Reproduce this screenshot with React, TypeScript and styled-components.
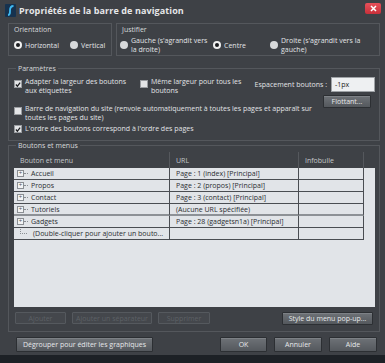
import React from "react";
import styled, { createGlobalStyle } from "styled-components";

const Global = createGlobalStyle`
  html, body { margin: 0; padding: 0; background: #3e4146; }
  body { font-family: "Open Sans", "Noto Sans", sans-serif; font-size: 7px; color: #e2e4e6; }
  * { box-sizing: border-box; }
`;

const Dialog = styled.div`
  width: 385px;
  height: 363px;
  background: #3e4146;
  display: flex;
  flex-direction: column;
  overflow: hidden;
`;

const TitleBar = styled.div`
  height: 21px;
  display: flex;
  align-items: center;
  padding: 0 4px 0 5px;
  gap: 3px;
`;

const Title = styled.div`
  flex: 1;
  font-size: 9px;
  font-weight: 700;
  color: #e6e7e9;
  letter-spacing: 0.1px;
`;

const CloseBtn = styled.div`
  width: 16px;
  height: 11px;
  border-radius: 2px;
  background: linear-gradient(#e8505a, #c7303a);
  display: flex;
  align-items: center;
  justify-content: center;
  margin-top: -5px;
`;

const Body = styled.div`
  flex: 1;
  display: flex;
  flex-direction: column;
  padding: 2px 5px 0 8px;
`;

const TopRow = styled.div`
  display: flex;
  gap: 4px;
  height: 33px;
`;

const Box = styled.div<{ $w?: number }>`
  border: 1px solid #54575c;
  ${(p) => (p.$w ? `width: ${p.$w}px;` : "flex: 1;")}
  display: flex;
  flex-direction: column;
  padding: 1px 4px 0 5px;
`;

const BoxLabel = styled.div`
  color: #d8dadc;
  line-height: 10px;
`;

const RadioRow = styled.div`
  display: flex;
  align-items: center;
  flex: 1;
`;

const RadioItem = styled.label<{ $w?: number; $shift?: number }>`
  display: flex;
  align-items: center;
  gap: 3px;
  ${(p) => (p.$w ? `width: ${p.$w}px;` : "")}
  ${(p) => (p.$shift ? `margin-left: ${p.$shift}px;` : "")}
  line-height: 9px;
`;

const Radio = styled.span<{ $on?: boolean }>`
  flex: none;
  width: 8px;
  height: 8px;
  border-radius: 50%;
  background: ${(p) => (p.$on ? "#f0f0f0" : "#d8d9db")};
  display: flex;
  align-items: center;
  justify-content: center;
  &::after {
    content: "";
    width: 4px;
    height: 4px;
    border-radius: 50%;
    background: ${(p) => (p.$on ? "#1a1c1f" : "transparent")};
  }
`;

const Fieldset = styled.fieldset<{ $h: number }>`
  border: 1px solid #54575c;
  margin: 0;
  padding: 0 4px 0 5px;
  height: ${(p) => p.$h}px;
  min-width: 0;
  display: flex;
  flex-direction: column;
`;

const Legend = styled.legend`
  padding: 0 2px;
  margin-left: 2px;
  color: #d8dadc;
  line-height: 9px;
`;

const ParamsGrid = styled.div`
  display: flex;
  flex-direction: column;
`;

const ParamTop = styled.div`
  display: flex;
  align-items: flex-start;
  height: 30px;
  padding-top: 4px;
`;

const CheckItem = styled.label<{ $w?: number }>`
  display: flex;
  align-items: flex-start;
  gap: 3px;
  line-height: 9px;
  ${(p) => (p.$w ? `width: ${p.$w}px;` : "")}
`;

const Check = styled.span<{ $on?: boolean; $mt?: number }>`
  flex: none;
  width: 8px;
  height: 8px;
  margin-top: ${(p) => p.$mt ?? 3}px;
  background: #e4e5e7;
  border: 1px solid #9a9da1;
  display: flex;
  align-items: center;
  justify-content: center;
`;

const SpacingCol = styled.div`
  margin-left: auto;
  display: flex;
  flex-direction: column;
  align-items: flex-end;
  gap: 3px;
`;

const SpacingRow = styled.div`
  display: flex;
  align-items: center;
  gap: 4px;
  white-space: nowrap;
`;

const Input = styled.div`
  width: 44px;
  height: 15px;
  background: #eef0f2;
  border: 1px solid #9ea2a6;
  color: #222;
  padding: 2px 3px;
  line-height: 9px;
`;

const Btn = styled.div<{ $w: number; $h?: number; $disabled?: boolean; $mr?: number }>`
  width: ${(p) => p.$w}px;
  height: ${(p) => p.$h ?? 14}px;
  margin-right: ${(p) => p.$mr ?? 0}px;
  display: flex;
  align-items: center;
  justify-content: center;
  white-space: nowrap;
  border-radius: 1px;
  ${(p) =>
    p.$disabled
      ? `
    border: 1px solid #55595e;
    color: #5d6166;
    background: #44474c;
  `
      : `
    border: 1px solid #2c2f33;
    color: #e6e8ea;
    background: linear-gradient(#6e7277, #54585d);
    box-shadow: inset 0 1px 0 #7d8186;
  `}
`;

const ParamLine = styled.div<{ $mt: number }>`
  margin-top: ${(p) => p.$mt}px;
`;

const TableWrap = styled.div`
  margin-top: 2px;
  display: flex;
  flex-direction: column;
`;

const Cols = "156px 129px 65px 7px";

const HeadRow = styled.div`
  display: grid;
  grid-template-columns: ${Cols};
  height: 16px;
`;

const HeadCell = styled.div`
  display: flex;
  align-items: center;
  padding-left: 6px;
  color: #c4c7ca;
  border-right: 1px solid #55585d;
`;

const Tbody = styled.div`
  height: 139px;
  background: #e1e4e8;
  display: flex;
  flex-direction: column;
`;

const Row = styled.div`
  display: grid;
  grid-template-columns: ${Cols};
  height: 12px;
`;

const Cell = styled.div<{ $thick?: boolean }>`
  display: flex;
  align-items: center;
  padding-left: 6px;
  color: #2b2e32;
  white-space: nowrap;
  overflow: hidden;
  border-right: 1px solid #4a4d52;
  border-bottom: ${(p) => (p.$thick ? "2px solid #8d9196" : "1px solid #4a4d52")};
`;

const TreeCell = styled(Cell)`
  padding-left: 3px;
`;

const Plus = styled.span`
  flex: none;
  width: 7px;
  height: 7px;
  border: 1px solid #8a8e93;
  background: #f2f3f4;
  display: flex;
  align-items: center;
  justify-content: center;
  font-size: 6px;
  line-height: 5px;
  color: #555;
`;

const TreeLine = styled.span<{ $w: number }>`
  flex: none;
  width: ${(p) => p.$w}px;
  border-top: 1px dotted #8a8e93;
  margin-right: 3px;
`;

const Elbow = styled.span`
  flex: none;
  width: 7px;
  height: 7px;
  margin-left: 3px;
  margin-top: -6px;
  border-left: 1px dotted #8a8e93;
  border-bottom: 1px dotted #8a8e93;
  margin-right: 6px;
`;

const GroupButtons = styled.div`
  display: flex;
  gap: 6px;
  padding: 5px 0 0 1px;
`;

const Spacer = styled.div`
  flex: 1;
`;

const Gap = styled.div<{ $h: number }>`
  height: ${(p) => p.$h}px;
`;

const BottomRow = styled.div`
  display: flex;
  align-items: center;
  padding: 5px 0 0 8px;
  gap: 7px;
`;

const BottomStrip = styled.div`
  height: 8px;
  background: #1d2126;
  margin-top: auto;
`;

const rows = [
  { name: "Accueil", url: "Page : 1 (index) [Principal]" },
  { name: "Propos", url: "Page : 2 (propos) [Principal]" },
  { name: "Contact", url: "Page : 3 (contact) [Principal]" },
  { name: "Tutoriels", url: "(Aucune URL spécifiée)", thick: true },
  { name: "Gadgets", url: "Page : 28 (gadgetsn1a) [Principal]" },
];

const CheckMark = () => (
  <svg width="7" height="7" viewBox="0 0 7 7">
    <path d="M1 3.5 L2.8 5.5 L6 1.2" stroke="#1b1d20" strokeWidth="1.4" fill="none" />
  </svg>
);

export default function App() {
  return (
    <>
      <Global />
      <Dialog>
        <TitleBar>
          <svg width="11" height="13" viewBox="0 0 11 13">
            <rect x="0" y="0" width="11" height="13" rx="1" fill="#16324f" />
            <path d="M3 11 C5 11 5 9 5 6.5 C5 3.5 6 2 8.5 2" stroke="#3fb8f0" strokeWidth="1.8" fill="none" />
          </svg>
          <Title>Propriétés de la barre de navigation</Title>
          <CloseBtn>
            <svg width="7" height="7" viewBox="0 0 7 7">
              <path d="M1 1 L6 6 M6 1 L1 6" stroke="#fff" strokeWidth="1.5" />
            </svg>
          </CloseBtn>
        </TitleBar>
        <Body>
          <TopRow>
            <Box $w={104}>
              <BoxLabel>Orientation</BoxLabel>
              <RadioRow>
                <RadioItem $w={56}>
                  <Radio $on />
                  Horizontal
                </RadioItem>
                <RadioItem>
                  <Radio />
                  Vertical
                </RadioItem>
              </RadioRow>
            </Box>
            <Box>
              <BoxLabel>Justifier</BoxLabel>
              <RadioRow>
                <RadioItem $w={93} $shift={-2}>
                  <Radio />
                  <span>
                    Gauche (s'agrandit vers
                    <br />
                    la droite)
                  </span>
                </RadioItem>
                <RadioItem $w={57}>
                  <Radio $on />
                  Centre
                </RadioItem>
                <RadioItem>
                  <Radio />
                  <span>
                    Droite (s'agrandit vers la
                    <br />
                    gauche)
                  </span>
                </RadioItem>
              </RadioRow>
            </Box>
          </TopRow>
          <Gap $h={8} />
          <Fieldset $h={77}>
            <Legend>Paramètres</Legend>
            <ParamsGrid>
              <ParamTop>
                <CheckItem $w={126}>
                  <Check $on>
                    <CheckMark />
                  </Check>
                  <span>
                    Adapter la largeur des boutons
                    <br />
                    aux étiquettes
                  </span>
                </CheckItem>
                <CheckItem>
                  <Check />
                  <span>
                    Même largeur pour tous les
                    <br />
                    boutons
                  </span>
                </CheckItem>
                <SpacingCol>
                  <SpacingRow>
                    <span>Espacement boutons :</span>
                    <Input>-1px</Input>
                  </SpacingRow>
                  <Btn $w={48} $h={13} $mr={4}>
                    Flottant...
                  </Btn>
                </SpacingCol>
              </ParamTop>
              <ParamLine $mt={1}>
                <CheckItem>
                  <Check />
                  <span>
                    Barre de navigation du site (renvoie automatiquement à toutes les pages et apparaît sur
                    <br />
                    toutes les pages du site)
                  </span>
                </CheckItem>
              </ParamLine>
              <ParamLine $mt={2}>
                <CheckItem>
                  <Check $on $mt={1}>
                    <CheckMark />
                  </Check>
                  <span>L'ordre des boutons correspond à l'ordre des pages</span>
                </CheckItem>
              </ParamLine>
            </ParamsGrid>
          </Fieldset>
          <Fieldset $h={191}>
            <Legend>Boutons et menus</Legend>
            <TableWrap>
              <HeadRow>
                <HeadCell>Bouton et menu</HeadCell>
                <HeadCell>URL</HeadCell>
                <HeadCell>Infobulle</HeadCell>
                <div />
              </HeadRow>
              <Tbody>
                {rows.map((r) => (
                  <Row key={r.name}>
                    <TreeCell $thick={r.thick}>
                      <Plus>+</Plus>
                      <TreeLine $w={4} />
                      {r.name}
                    </TreeCell>
                    <Cell $thick={r.thick}>{r.url}</Cell>
                    <Cell $thick={r.thick} />
                    <div />
                  </Row>
                ))}
                <Row>
                  <TreeCell>
                    <Elbow />
                    (Double-cliquer pour ajouter un bouto...
                  </TreeCell>
                  <Cell />
                  <Cell />
                  <div />
                </Row>
              </Tbody>
            </TableWrap>
            <GroupButtons>
              <Btn $w={51} $h={12} $disabled>Ajouter</Btn>
              <Btn $w={80} $h={12} $disabled>Ajouter un séparateur</Btn>
              <Btn $w={52} $h={12} $disabled>Supprimer</Btn>
              <Spacer />
              <Btn $w={91} $h={13} $mr={2}>Style du menu pop-up...</Btn>
            </GroupButtons>
          </Fieldset>
          <BottomRow>
            <Btn $w={137} $h={15}>Dégrouper pour éditer les graphiques</Btn>
            <Spacer />
            <Btn $w={47} $h={15}>OK</Btn>
            <Btn $w={48} $h={15}>Annuler</Btn>
            <Btn $w={48} $h={15} $mr={3}>Aide</Btn>
          </BottomRow>
        </Body>
        <BottomStrip />
      </Dialog>
    </>
  );
}
